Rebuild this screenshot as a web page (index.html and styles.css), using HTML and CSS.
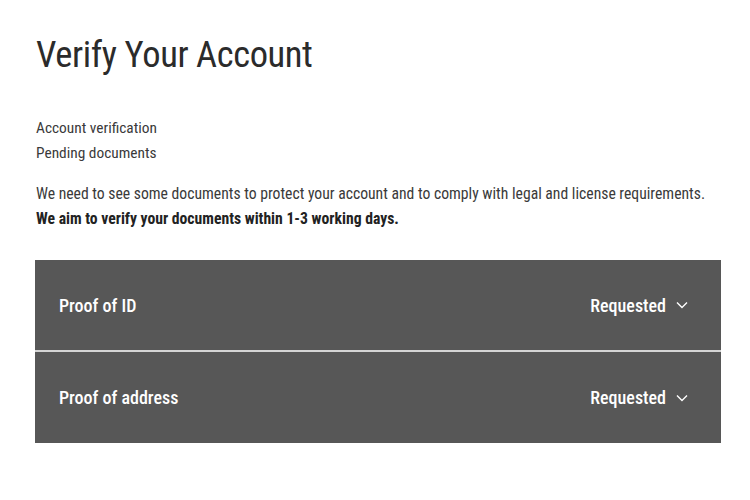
FILE: index.html
```html
<!DOCTYPE html>
<html>
<head>
<meta charset="utf-8">
<link rel="stylesheet" href="styles.css">
</head>
<body>
<main class="page">
  <h1 class="title">Verify Your Account</h1>
  <div class="status">
    <div>Account verification</div>
    <div>Pending documents</div>
  </div>
  <p class="intro">We need to see some documents to protect your account and to comply with legal and license requirements.<br><strong>We aim to verify your documents within 1-3 working days.</strong></p>
  <div class="panel">
    <div class="row">
      <span class="label">Proof of ID</span>
      <span class="state">Requested
        <svg class="chev" width="12" height="8" viewBox="0 0 12 8"><path d="M1 1.5 L6 6.5 L11 1.5" fill="none" stroke="#fff" stroke-width="1.4"/></svg>
      </span>
    </div>
    <div class="row">
      <span class="label">Proof of address</span>
      <span class="state">Requested
        <svg class="chev" width="12" height="8" viewBox="0 0 12 8"><path d="M1 1.5 L6 6.5 L11 1.5" fill="none" stroke="#fff" stroke-width="1.4"/></svg>
      </span>
    </div>
  </div>
</main>
</body>
</html>
```
FILE: styles.css
```css
html, body { margin: 0; padding: 0; background: #fff; }
body { font-family: "Roboto Condensed", Roboto, "Liberation Sans", sans-serif; font-stretch: condensed; color: #333; }
.page { padding: 33px 29px 0 36px; }
.title { margin: 0; font-weight: 400; font-size: 36.5px; line-height: 44px; color: #2b2b2b; letter-spacing: -0.4px; }
.status { margin-top: 39px; font-size: 15.4px; line-height: 25px; color: #3a3a3a; }
.intro { margin: 15px 0 0; font-size: 15.7px; line-height: 25px; color: #3a3a3a; }
.intro strong { color: #222; }
.panel { margin: 29px 0 0 -1px; width: 686px; background: #575757; }
.row { height: 90px; display: flex; align-items: center; justify-content: space-between; padding: 0 33px 0 24px; color: #fff; font-size: 18px; font-weight: 500; }
.row + .row { border-top: 2px solid #d4d4d4; height: 91px; }
.state { display: flex; align-items: center; gap: 10px; }
.chev { display: block; }
```
